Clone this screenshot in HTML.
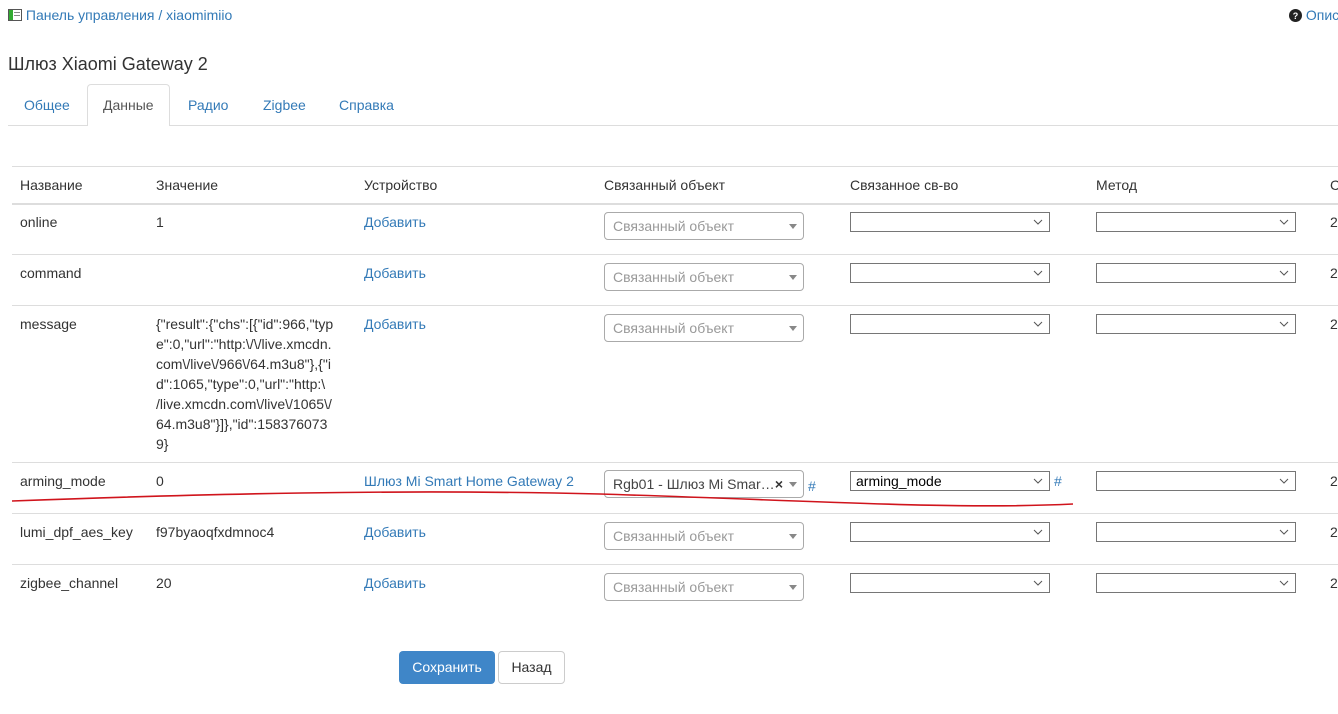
<!DOCTYPE html>
<html><head><meta charset="utf-8">
<style>
*{box-sizing:border-box}
body{margin:0;width:1338px;height:714px;overflow:hidden;background:#fff;font-family:"Liberation Sans",sans-serif;font-size:14px;color:#333;position:relative}
.a{position:absolute;white-space:nowrap;line-height:20px}
a,.l{color:#337ab7;text-decoration:none}
.hl{position:absolute;left:12px;width:1326px;height:1px;background:#ddd}
.s2{position:absolute;width:200px;height:28px;border:1px solid #aaa;border-radius:4px;background:#fff;color:#999;padding:5px 8px;line-height:17px;white-space:nowrap}
.s2 .ar{position:absolute;right:6px;top:11px;width:0;height:0;border-left:4px solid transparent;border-right:4px solid transparent;border-top:5px solid #888}
.ns{position:absolute;width:200px;height:20px;border:1px solid #767676;background:#fff;color:#000;padding:0 5px;line-height:18px}
.ns svg{position:absolute;right:6px;top:6px}
</style></head><body>
<div class="a" style="left:8px;top:5px"><svg width="14" height="14" style="vertical-align:-2px"><rect x="0.5" y="1.5" width="13" height="11" fill="#fff" stroke="#555"/><rect x="1" y="2" width="4" height="10" fill="#3a3"/><rect x="6" y="4" width="6" height="1" fill="#888"/><rect x="6" y="7" width="6" height="1" fill="#888"/></svg> <span class="l">Панель управления / xiaomimiio</span></div>
<div class="a" style="left:1289px;top:5px"><svg width="13" height="13" style="vertical-align:-2px"><circle cx="6.5" cy="6.5" r="6.5" fill="#222"/><text x="6.5" y="10" font-size="9" font-weight="bold" fill="#fff" text-anchor="middle" font-family="Liberation Sans">?</text></svg> <span class="l">Опис</span></div>
<div class="a" style="left:8px;top:53px;font-size:18px;line-height:22px">Шлюз Xiaomi Gateway 2</div>
<div class="hl" style="left:8px;top:125px;width:1330px"></div>
<div style="position:absolute;left:87px;top:84px;width:83px;height:42px;border:1px solid #ddd;border-bottom:none;border-radius:4px 4px 0 0;background:#fff"></div>
<div class="a" style="left:24px;top:95px"><span class="l">Общее</span></div>
<div class="a" style="left:103px;top:95px;color:#555">Данные</div>
<div class="a" style="left:188px;top:95px"><span class="l">Радио</span></div>
<div class="a" style="left:263px;top:95px"><span class="l">Zigbee</span></div>
<div class="a" style="left:339px;top:95px"><span class="l">Справка</span></div>

<div class="hl" style="top:166px"></div>
<div class="hl" style="top:203px;height:2px"></div>
<div class="hl" style="top:254px"></div>
<div class="hl" style="top:305px"></div>
<div class="hl" style="top:462px"></div>
<div class="hl" style="top:513px"></div>
<div class="hl" style="top:564px"></div>

<div class="a" style="left:20px;top:175px">Название</div>
<div class="a" style="left:156px;top:175px">Значение</div>
<div class="a" style="left:364px;top:175px">Устройство</div>
<div class="a" style="left:604px;top:175px">Связанный объект</div>
<div class="a" style="left:850px;top:175px">Связанное св-во</div>
<div class="a" style="left:1096px;top:175px">Метод</div>
<div class="a" style="left:1330px;top:175px">С</div>

<!-- rows -->
<div class="a" style="left:20px;top:212px">online</div><div class="a" style="left:156px;top:212px">1</div><div class="a" style="left:364px;top:212px"><span class="l">Добавить</span></div>
<div class="a" style="left:20px;top:263px">command</div><div class="a" style="left:364px;top:263px"><span class="l">Добавить</span></div>
<div class="a" style="left:20px;top:314px">message</div><div class="a" style="left:364px;top:314px"><span class="l">Добавить</span></div>
<div class="a" style="left:156px;top:314px">{"result":{"chs":[{"id":966,"typ<br>e":0,"url":"http:\/\/live.xmcdn.<br>com\/live\/966\/64.m3u8"},{"i<br>d":1065,"type":0,"url":"http:\<br>/live.xmcdn.com\/live\/1065\/<br>64.m3u8"}]},"id":158376073<br>9}</div>
<div class="a" style="left:20px;top:471px">arming_mode</div><div class="a" style="left:156px;top:471px">0</div><div class="a" style="left:364px;top:471px"><span class="l">Шлюз Mi Smart Home Gateway 2</span></div>
<div class="a" style="left:20px;top:522px">lumi_dpf_aes_key</div><div class="a" style="left:156px;top:522px">f97byaoqfxdmnoc4</div><div class="a" style="left:364px;top:522px"><span class="l">Добавить</span></div>
<div class="a" style="left:20px;top:573px">zigbee_channel</div><div class="a" style="left:156px;top:573px">20</div><div class="a" style="left:364px;top:573px"><span class="l">Добавить</span></div>

<div class="s2" style="left:604px;top:212px">Связанный объект<i class="ar"></i></div>
<div class="s2" style="left:604px;top:263px">Связанный объект<i class="ar"></i></div>
<div class="s2" style="left:604px;top:314px">Связанный объект<i class="ar"></i></div>
<div class="s2" style="left:604px;top:470px;color:#444">Rgb01 - Шлюз Mi Smar…<span style="position:absolute;right:20px;top:5px;font-weight:bold;color:#333">×</span><i class="ar"></i></div>
<div class="a l" style="left:808px;top:476px">#</div>
<div class="s2" style="left:604px;top:522px">Связанный объект<i class="ar"></i></div>
<div class="s2" style="left:604px;top:573px">Связанный объект<i class="ar"></i></div>

<div class="ns" style="left:850px;top:212px"><svg width="10" height="6"><path d="M1 1l4 4 4-4" fill="none" stroke="#555"/></svg></div>
<div class="ns" style="left:850px;top:263px"><svg width="10" height="6"><path d="M1 1l4 4 4-4" fill="none" stroke="#555"/></svg></div>
<div class="ns" style="left:850px;top:314px"><svg width="10" height="6"><path d="M1 1l4 4 4-4" fill="none" stroke="#555"/></svg></div>
<div class="ns" style="left:850px;top:471px">arming_mode<svg width="10" height="6"><path d="M1 1l4 4 4-4" fill="none" stroke="#555"/></svg></div>
<div class="a l" style="left:1054px;top:471px">#</div>
<div class="ns" style="left:850px;top:522px"><svg width="10" height="6"><path d="M1 1l4 4 4-4" fill="none" stroke="#555"/></svg></div>
<div class="ns" style="left:850px;top:573px"><svg width="10" height="6"><path d="M1 1l4 4 4-4" fill="none" stroke="#555"/></svg></div>

<div class="ns" style="left:1096px;top:212px"><svg width="10" height="6"><path d="M1 1l4 4 4-4" fill="none" stroke="#555"/></svg></div>
<div class="ns" style="left:1096px;top:263px"><svg width="10" height="6"><path d="M1 1l4 4 4-4" fill="none" stroke="#555"/></svg></div>
<div class="ns" style="left:1096px;top:314px"><svg width="10" height="6"><path d="M1 1l4 4 4-4" fill="none" stroke="#555"/></svg></div>
<div class="ns" style="left:1096px;top:471px"><svg width="10" height="6"><path d="M1 1l4 4 4-4" fill="none" stroke="#555"/></svg></div>
<div class="ns" style="left:1096px;top:522px"><svg width="10" height="6"><path d="M1 1l4 4 4-4" fill="none" stroke="#555"/></svg></div>
<div class="ns" style="left:1096px;top:573px"><svg width="10" height="6"><path d="M1 1l4 4 4-4" fill="none" stroke="#555"/></svg></div>

<div class="a" style="left:1330px;top:212px">2</div>
<div class="a" style="left:1330px;top:263px">2</div>
<div class="a" style="left:1330px;top:314px">2</div>
<div class="a" style="left:1330px;top:471px">2</div>
<div class="a" style="left:1330px;top:522px">2</div>
<div class="a" style="left:1330px;top:573px">2</div>

<svg style="position:absolute;left:0;top:0" width="1338" height="714"><path d="M12 501 C200 494 400 489 600 494 C800 500 950 510 1073 504" fill="none" stroke="#d0141c" stroke-width="1.6"/></svg>

<div style="position:absolute;left:399px;top:651px;width:96px;height:33px;background:#3f86c8;border-radius:4px;color:#fff;text-align:center;line-height:32px">Сохранить</div>
<div style="position:absolute;left:498px;top:651px;width:67px;height:33px;background:#fff;border:1px solid #ccc;border-radius:4px;color:#333;text-align:center;line-height:31px">Назад</div>
</body></html>
